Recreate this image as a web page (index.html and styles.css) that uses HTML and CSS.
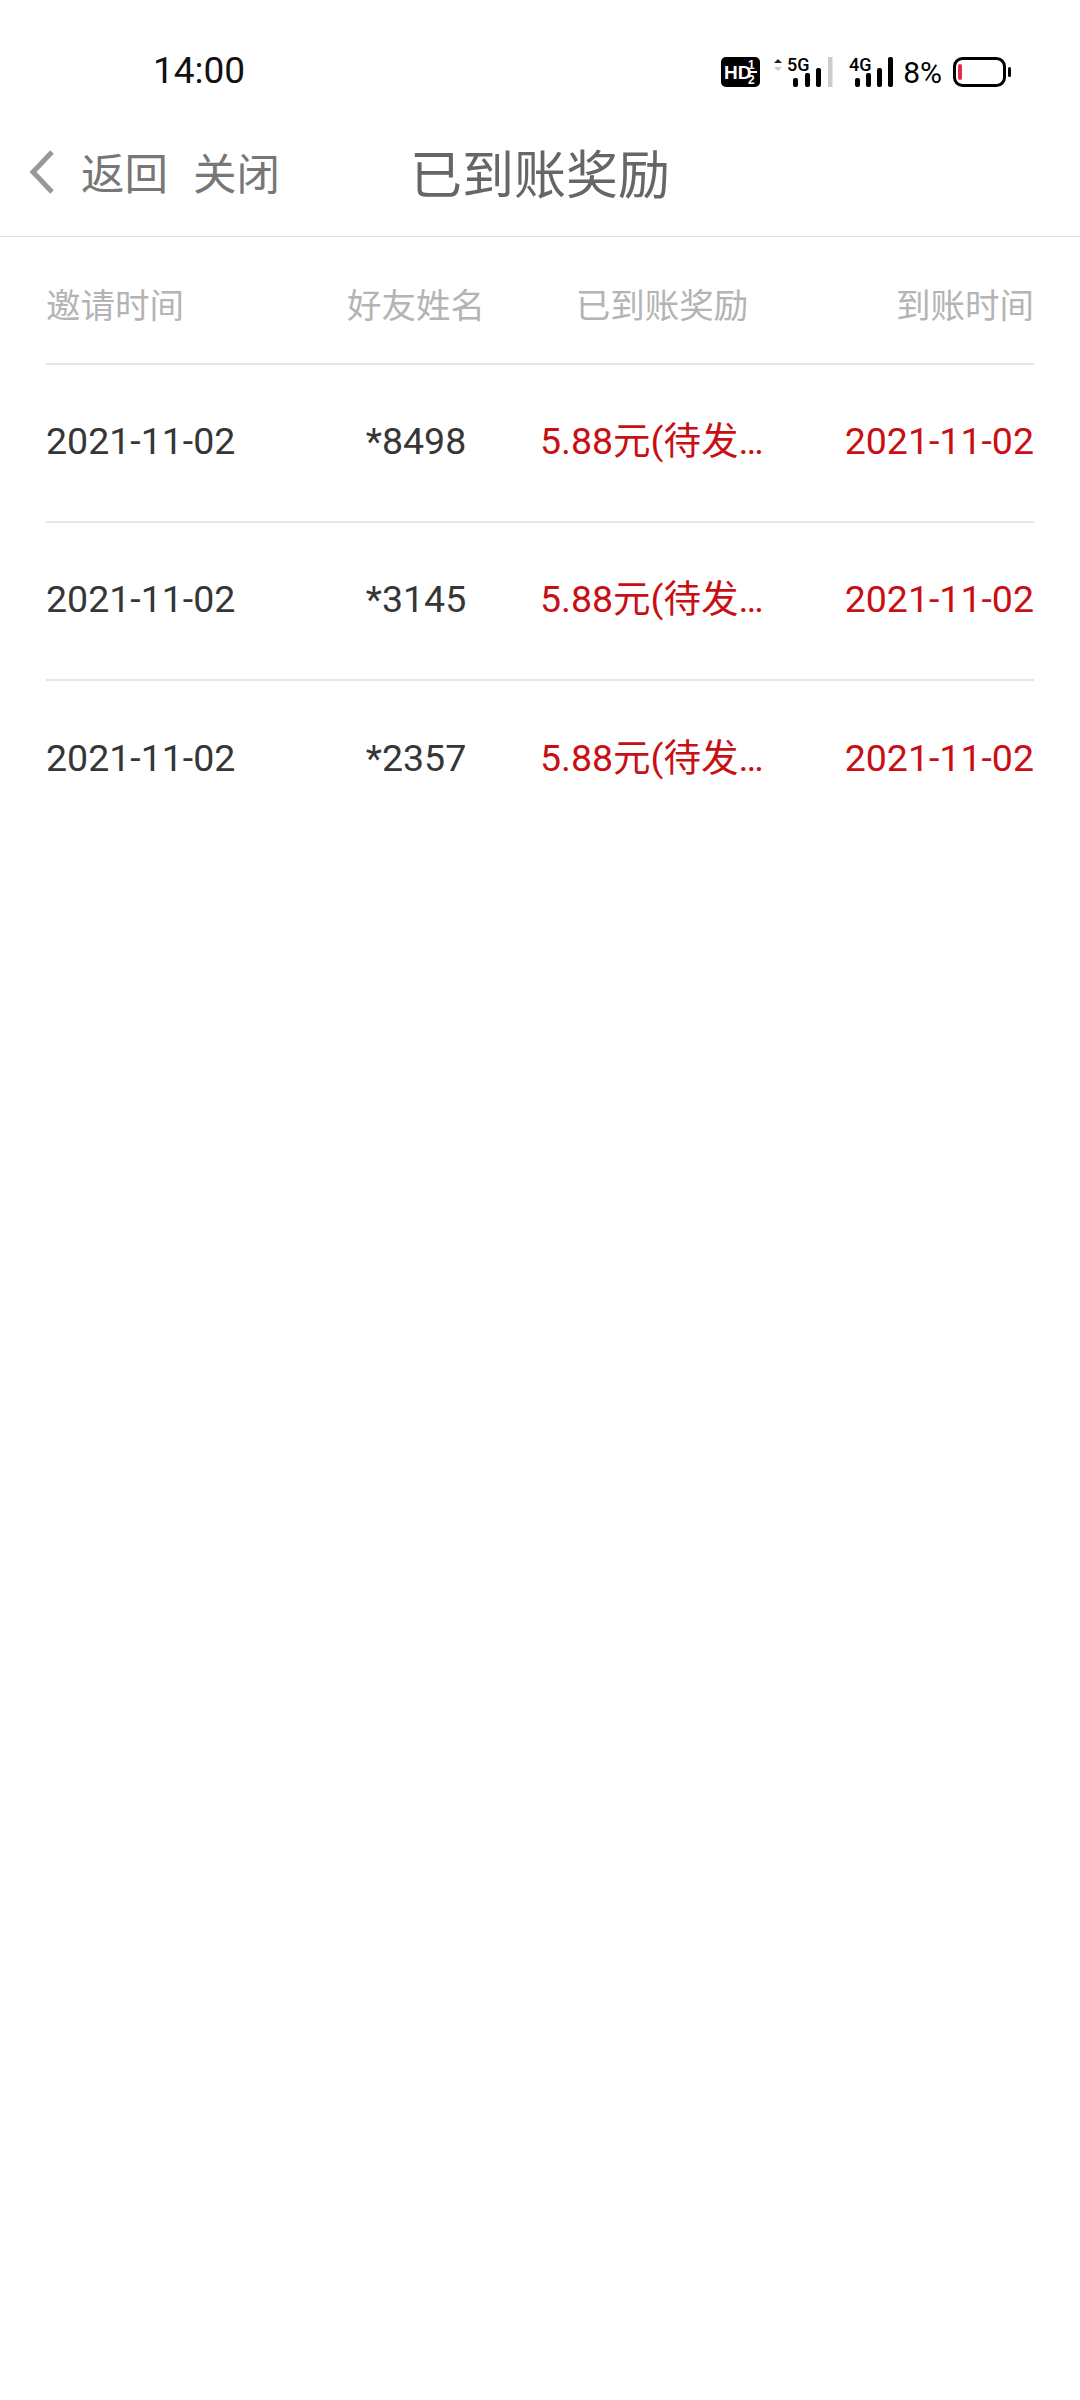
FILE: index.html
```html
<!DOCTYPE html>
<html lang="zh-CN">
<head>
<meta charset="utf-8">
<title>已到账奖励</title>
<link rel="stylesheet" href="styles.css">
</head>
<body>
<div class="status">
  <span class="clock">14:00</span>
  <div class="status-right">
    <svg class="hd" width="39" height="34" viewBox="0 -2 39 34"><rect width="39" height="30" rx="5" fill="#000"/><text x="3" y="22" class="hd-t">HD</text><text x="27" y="12" class="hd-s">1</text><text x="27" y="27" class="hd-s">2</text><rect x="27" y="14" width="9" height="2" fill="#fff"/></svg>
    <svg class="sig" width="60" height="36" viewBox="0 -2 60 36"><path d="M1 7l4-4 4 4z" fill="#222"/><path d="M1 11l4 4 4-4z" fill="#ccc"/><text x="14" y="15" class="net">5G</text><rect x="20" y="22" width="5" height="9" rx="2" fill="#000"/><rect x="32" y="17" width="5" height="14" rx="2" fill="#000"/><rect x="43" y="12" width="5" height="19" rx="2" fill="#000"/><rect x="55" y="1" width="4.500" height="30" fill="#ccc"/></svg>
    <svg class="sig2" width="46" height="36" viewBox="0 -2 46 36"><text x="1" y="15" class="net">4G</text><rect x="7" y="22" width="5" height="9" rx="2" fill="#000"/><rect x="18" y="17" width="5" height="14" rx="2" fill="#000"/><rect x="29" y="12" width="5" height="19" rx="2" fill="#000"/><rect x="40" y="1" width="5" height="30" rx="2" fill="#000"/></svg>
    <span class="pct">8%</span>
    <svg class="bat" width="60" height="30" viewBox="0 0 60 30"><rect x="1.500" y="1.500" width="50" height="27" rx="8" fill="none" stroke="#000" stroke-width="3"/><rect x="5" y="7" width="4" height="16" rx="2" fill="#e0304a"/><rect x="55" y="10" width="3" height="10" rx="1.500" fill="#000"/></svg>
  </div>
</div>
<nav class="nav">
  <svg class="back" width="30" height="48" viewBox="0 0 30 48"><path d="M25 4L6 24l19 20" fill="none" stroke="#999" stroke-width="5"/></svg>
  <span class="nav-link">返回</span>
  <span class="nav-link">关闭</span>
  <h1 class="title">已到账奖励</h1>
</nav>
<main class="table">
  <div class="row head">
    <span class="c1">邀请时间</span><span class="c2">好友姓名</span><span class="c3">已到账奖励</span><span class="c4">到账时间</span>
  </div>
  <div class="row">
    <span class="c1">2021-11-02</span><span class="c2">*8498</span><span class="c3 red trunc">5.88元(待发放)</span><span class="c4 red">2021-11-02</span>
  </div>
  <div class="row">
    <span class="c1">2021-11-02</span><span class="c2">*3145</span><span class="c3 red trunc">5.88元(待发放)</span><span class="c4 red">2021-11-02</span>
  </div>
  <div class="row last">
    <span class="c1">2021-11-02</span><span class="c2">*2357</span><span class="c3 red trunc">5.88元(待发放)</span><span class="c4 red">2021-11-02</span>
  </div>
</main>
</body>
</html>
```
FILE: styles.css
```css
* { box-sizing: border-box; }
html, body { margin: 0; padding: 0; background: #fff; }
body { width: 1080px; height: 2400px; font-family: Roboto, "Noto Sans CJK SC", sans-serif; overflow: hidden; }
.status { height: 118px; padding: 22px 67px 0 153px; display: flex; justify-content: space-between; align-items: center; }
.clock { font-size: 37px; color: #111; }
.status-right { display: flex; align-items: center; padding-top: 4px; }
.hd { margin-right: 13px; }
.hd-t { font: bold 19px "Liberation Sans", sans-serif; fill: #fff; }
.hd-s { font: bold 12px "Liberation Sans", sans-serif; fill: #fff; }
.net { font: 500 18px Roboto, sans-serif; fill: #000; }
.sig { margin-right: 15px; }
.sig2 { margin-right: 9px; }
.pct { font-size: 30px; color: #000; margin-right: 11px; }
.nav { height: 119px; display: flex; align-items: center; padding: 0 0 11px 27px; border-bottom: 1px solid #e2e2e2; }
.back { margin-right: 24px; }
.nav-link { font-size: 43.500px; color: #777; margin-right: 25px; }
.title { margin: 0 0 0 105px; font-size: 52px; font-weight: 400; color: #666; }
.table { padding: 0 46px; }
.row { height: 158px; padding-bottom: 4px; display: grid; grid-template-columns: 270px 200px 290px 228px; align-items: center; border-bottom: 2px solid #e6e6e6; font-size: 37.500px; line-height: 44px; color: #363636; }
.row.head { height: 128px; padding: 11px 0 0; font-size: 34.500px; color: #b4b4b4; }
.row.last { border-bottom: 0; }
.c2 { text-align: center; }
.c3 { text-align: center; white-space: nowrap; padding-left: 2px; }
.trunc { padding: 0 39px 0 24px; text-align: left; overflow: hidden; text-overflow: ellipsis; }
.c4 { text-align: right; white-space: nowrap; }
.red { color: #c81014; }
```
